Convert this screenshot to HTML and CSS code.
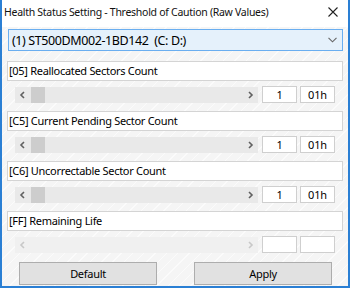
FILE: index.html
```html
<!DOCTYPE html>
<html lang="en">
<head>
	<meta charset="UTF-8">
	<title>Health Status Setting</title>
	<link rel="stylesheet" href="styles.css">
</head>
<body>
	<div class="window">
		<div class="titlebar">
			<span class="title">Health Status Setting - Threshold of Caution (Raw Values)</span>
			<svg class="close" width="10" height="10" viewBox="0 0 10 10"><path d="M0.5 0.5 L9.5 9.5 M9.5 0.5 L0.5 9.5" stroke="#222" stroke-width="1.1"/></svg>
		</div>

		<div class="content">
			<div class="combo">
				<span>(1) ST500DM002-1BD142&nbsp;&nbsp;(C: D:)</span>
				<svg width="9" height="6" viewBox="0 0 9 6"><path d="M0.5 0.8 L4.5 4.8 L8.5 0.8" fill="none" stroke="#666" stroke-width="1.1"/></svg>
			</div>

			<div class="attr">
				<div class="label">[05] Reallocated Sectors Count</div>
				<div class="row">
					<div class="scroll">
						<svg class="arrow" width="16" height="16" viewBox="0 0 16 16"><path d="M9 5 L6 8 L9 11" fill="none" stroke="#606060" stroke-width="1.6"/></svg>
						<div class="thumb"></div>
						<div class="track"></div>
						<svg class="arrow" width="16" height="16" viewBox="0 0 16 16"><path d="M7 5 L10 8 L7 11" fill="none" stroke="#606060" stroke-width="1.6"/></svg>
					</div>
					<div class="edit">1</div>
					<div class="edit">01h</div>
				</div>
			</div>

			<div class="attr">
				<div class="label">[C5] Current Pending Sector Count</div>
				<div class="row">
					<div class="scroll">
						<svg class="arrow" width="16" height="16" viewBox="0 0 16 16"><path d="M9 5 L6 8 L9 11" fill="none" stroke="#606060" stroke-width="1.6"/></svg>
						<div class="thumb"></div>
						<div class="track"></div>
						<svg class="arrow" width="16" height="16" viewBox="0 0 16 16"><path d="M7 5 L10 8 L7 11" fill="none" stroke="#606060" stroke-width="1.6"/></svg>
					</div>
					<div class="edit">1</div>
					<div class="edit">01h</div>
				</div>
			</div>

			<div class="attr">
				<div class="label">[C6] Uncorrectable Sector Count</div>
				<div class="row">
					<div class="scroll">
						<svg class="arrow" width="16" height="16" viewBox="0 0 16 16"><path d="M9 5 L6 8 L9 11" fill="none" stroke="#606060" stroke-width="1.6"/></svg>
						<div class="thumb"></div>
						<div class="track"></div>
						<svg class="arrow" width="16" height="16" viewBox="0 0 16 16"><path d="M7 5 L10 8 L7 11" fill="none" stroke="#606060" stroke-width="1.6"/></svg>
					</div>
					<div class="edit">1</div>
					<div class="edit">01h</div>
				</div>
			</div>

			<div class="attr">
				<div class="label">[FF] Remaining Life</div>
				<div class="row">
					<div class="scroll disabled">
						<svg class="arrow" width="16" height="16" viewBox="0 0 16 16"><path d="M9 5 L6 8 L9 11" fill="none" stroke="#c8c8c8" stroke-width="1.6"/></svg>
						<div class="track"></div>
						<svg class="arrow" width="16" height="16" viewBox="0 0 16 16"><path d="M7 5 L10 8 L7 11" fill="none" stroke="#c8c8c8" stroke-width="1.6"/></svg>
					</div>
					<div class="edit"></div>
					<div class="edit"></div>
				</div>
			</div>

			<div class="buttons">
				<button type="button">Default</button>
				<button type="button">Apply</button>
			</div>
		</div>
	</div>
</body>
</html>
```

FILE: styles.css
```css
:root{
	font-family: "Noto Sans", "Open Sans", sans-serif;
}

body{
	margin: 0;
}

.window{
	width: 346px;
	height: 286px;
	border: 2px solid #2a7fd4;
	border-top: 0;
	background-color: #f5f5f5;
	background-image: repeating-linear-gradient(135deg, transparent 0, transparent 7px, #fbfbfb 7px, #fbfbfb 8px);
	display: flex;
	flex-direction: column;
}

.titlebar{
	height: 27px;
	background-color: #fff;
	display: flex;
	align-items: center;
	justify-content: space-between;
	padding: 0 10px 4px 2px;
	box-sizing: border-box;
}

.title{
	font-size: 10.5px;
	letter-spacing: -0.28px;
	color: #111;
}

.close{
	margin-top: 1px;
}

.content{
	padding: 2px 5px 0 5px;
	display: flex;
	flex-direction: column;
}

.combo{
	height: 22px;
	margin-left: 1px;
	border: 1px solid #6aaef0;
	background-color: #e5f1fb;
	box-sizing: border-box;
	display: flex;
	align-items: center;
	justify-content: space-between;
	padding: 0 5px 0 3px;
	font-size: 12.5px;
	letter-spacing: -0.4px;
	color: #000;
}

.attr{
	margin-top: 10px;
}

.attr + .attr{
	margin-top: 8px;
}

.label{
	height: 20px;
	box-sizing: border-box;
	border: 1px solid #d4d4d4;
	background-color: #fff;
	font-size: 11px;
	letter-spacing: -0.3px;
	line-height: 18px;
	padding-left: 1px;
	color: #000;
}

.row{
	display: flex;
	align-items: center;
	margin-top: 5px;
	padding-left: 8px;
}

.scroll{
	width: 243px;
	height: 16px;
	display: flex;
	background-color: #e9e9e9;
}

.scroll.disabled{
	background-color: #f0f0f0;
}

.thumb{
	width: 14px;
	background-color: #cdcdcd;
}

.track{
	flex: 1;
}

.edit{
	width: 35px;
	height: 17px;
	box-sizing: border-box;
	border: 1px solid #cfcfcf;
	background-color: #fff;
	margin-left: 4px;
	font-size: 11px;
	letter-spacing: -0.2px;
	line-height: 15px;
	text-align: center;
	color: #000;
}

.edit + .edit{
	margin-left: 3px;
}

.buttons{
	display: flex;
	justify-content: space-between;
	padding: 0 11px 0 12px;
	margin-top: 9px;
}

button{
	width: 138px;
	height: 23px;
	border: 1px solid #adadad;
	background-color: #e1e1e1;
	font-family: "Noto Sans", "Open Sans", sans-serif;
	font-size: 11px;
	letter-spacing: -0.3px;
	color: #000;
	padding: 0;
}
```
